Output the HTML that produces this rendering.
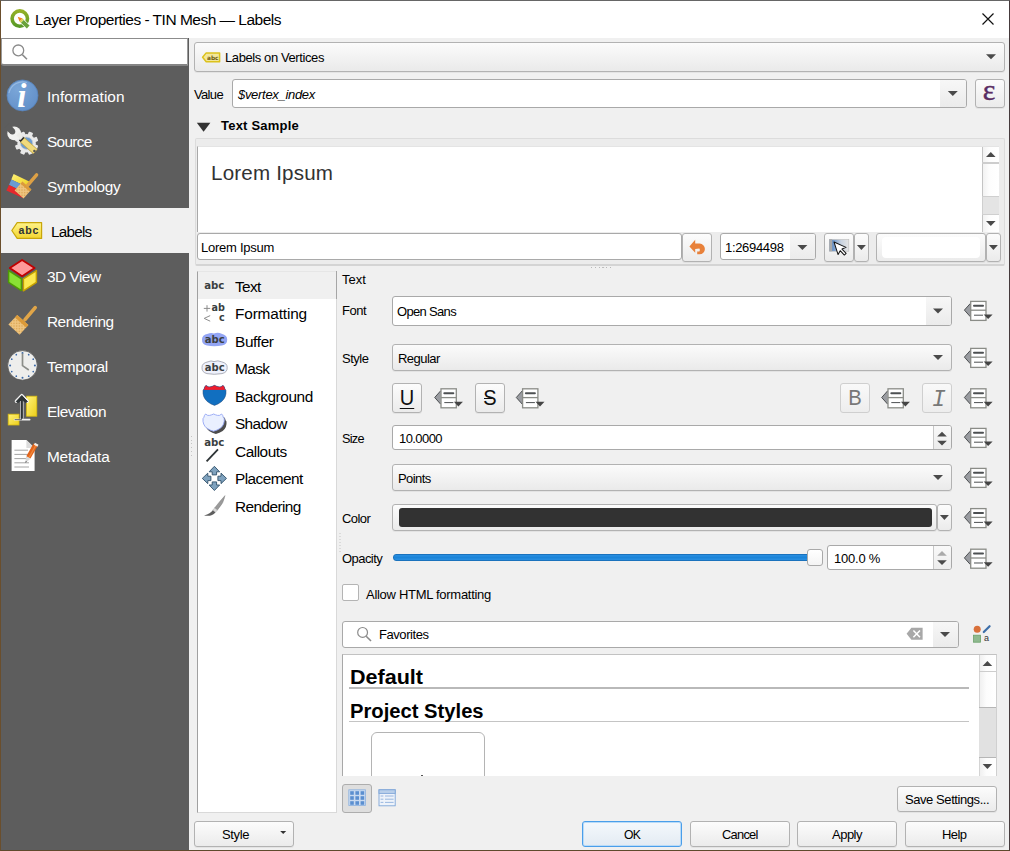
<!DOCTYPE html>
<html><head><meta charset="utf-8"><title>Layer Properties - TIN Mesh — Labels</title>
<style>
*{box-sizing:border-box;margin:0;padding:0}
html,body{width:1010px;height:851px;overflow:hidden;background:#f0f0f0}
body{position:relative;font-family:"Liberation Sans",sans-serif;font-size:13px;color:#000}
.abs{position:absolute}
.tx{white-space:nowrap}
#frame{left:0;top:0;width:1010px;height:851px;border-top:1px solid #666;border-left:1px solid #6a4e2c;border-right:1px solid #453a3c;border-bottom:1px solid #5e4a2c;z-index:50}
#title{left:1px;top:1px;width:1008px;height:37px;background:#fff}
#side{left:1px;top:38px;width:188px;height:812px;background:#5d5d5d}
.btn{border:1px solid #b2b2b2;border-radius:3px;background:linear-gradient(#fcfcfc,#ebebeb);box-shadow:0 1px 0 rgba(0,0,0,0.05)}
.btnd{border:1px solid #cfcfcf;border-radius:3px;background:linear-gradient(#f9f9f9,#ededed)}
.combo{border:1px solid #b2b2b2;border-radius:3px;background:linear-gradient(#fbfbfb,#eaeaea);box-shadow:0 1px 0 rgba(0,0,0,0.05)}
.edit{border:1px solid #a9a9a9;border-radius:3px;background:#fff}
.white{background:#fff}
</style></head><body>
<div id="title" class="abs"></div>
<div id="side" class="abs"></div>
<div class="abs " style="left:1px;top:38px;width:187px;height:27px;background:#fff;border:1px solid #9a9a9a;border-top-color:#8c8c8c;border-bottom:2px solid #858585;border-radius:0 0 0 3px;height:28px"></div>
<div class="abs " style="left:1px;top:208px;width:189px;height:45px;background:#f0f0f0"></div>
<div class="abs combo" style="left:194px;top:42px;width:811px;height:30px;"></div>
<div class="abs edit" style="left:232px;top:79px;width:735px;height:29px;overflow:hidden"><div class="abs" style="right:0;top:0;width:26px;height:100%;background:linear-gradient(#f7f7f7,#ebebeb)"></div></div>
<div class="abs btn" style="left:975px;top:79px;width:30px;height:29px;"></div>
<div class="abs " style="left:195px;top:138px;width:810px;height:128px;background:#ececec;border:1px solid #dcdcdc;border-bottom:2px solid #d4d4d4;border-radius:2px"></div>
<div class="abs white" style="left:197px;top:146px;width:802px;height:86px;border-left:1px solid #a8a8a8;border-top:1px solid #e4e4e4"></div>
<div class="abs " style="left:982px;top:147px;width:17px;height:85px;background:linear-gradient(90deg,#f2f2f2,#fdfdfd 40%,#fff);border-left:1px solid #c4c4c4"></div>
<div class="abs " style="left:982px;top:162px;width:17px;height:2px;background:#cdcdcd"></div>
<div class="abs " style="left:982px;top:196px;width:17px;height:19px;background:#e4e4e4;border:1px solid #cfcfcf;border-right:none"></div>
<div class="abs edit" style="left:197px;top:233px;width:485px;height:27px;"></div>
<div class="abs btn" style="left:682px;top:233px;width:30px;height:29px;"></div>
<div class="abs edit" style="left:720px;top:233px;width:96px;height:27px;overflow:hidden"><div class="abs" style="right:0;top:0;width:25px;height:100%;background:linear-gradient(#f7f7f7,#ebebeb)"></div></div>
<div class="abs btn" style="left:824px;top:233px;width:30px;height:29px;"></div>
<div class="abs btn" style="left:854px;top:233px;width:15px;height:29px;"></div>
<div class="abs btn" style="left:876px;top:233px;width:110px;height:29px;"><div class="abs" style="left:5px;top:3px;right:5px;bottom:3px;background:#fff;border-radius:4px"></div></div>
<div class="abs btn" style="left:986px;top:233px;width:15px;height:29px;"></div>
<div class="abs white" style="left:197px;top:271px;width:140px;height:542px;border:1px solid #d9d9d9;border-left-color:#a0a0a0;border-top-color:#e6e6e6"></div>
<div class="abs " style="left:198px;top:272px;width:138px;height:27px;background:#f0f0f0"></div>
<div class="abs " style="left:336px;top:271px;width:1px;height:28px;background:#a6a6a6"></div>
<div class="abs edit" style="left:392px;top:296px;width:560px;height:30px;overflow:hidden"><div class="abs" style="right:0;top:0;width:25px;height:100%;background:linear-gradient(#f7f7f7,#ebebeb)"></div></div>
<div class="abs combo" style="left:392px;top:344px;width:560px;height:27px;"></div>
<div class="abs btn" style="left:392px;top:383px;width:30px;height:30px;"></div>
<div class="abs btn" style="left:475px;top:383px;width:30px;height:30px;"></div>
<div class="abs btnd" style="left:840px;top:383px;width:30px;height:30px;"></div>
<div class="abs btnd" style="left:922px;top:383px;width:30px;height:30px;"></div>
<div class="abs edit" style="left:392px;top:425px;width:560px;height:25px;overflow:hidden"><div class="abs" style="right:0;top:0;width:18px;height:100%;background:linear-gradient(#f9f9f9,#ececec);border-left:1px solid #c8c8c8"></div></div>
<div class="abs combo" style="left:392px;top:464px;width:560px;height:27px;"></div>
<div class="abs btn" style="left:392px;top:504px;width:545px;height:27px;"><div class="abs" style="left:6px;top:3px;right:4px;bottom:3px;background:#323232;border-radius:3px"></div></div>
<div class="abs btn" style="left:937px;top:504px;width:15px;height:27px;"></div>
<div class="abs " style="left:393px;top:554px;width:423px;height:7px;background:linear-gradient(#2a8fe2,#1b84d8 50%,#2a8fe2);border:1px solid #1a72bd;border-radius:3px"></div>
<div class="abs " style="left:807px;top:549px;width:16px;height:17px;background:linear-gradient(#fff,#f4f4f4);border:1px solid #a9a9a9;border-radius:3px"></div>
<div class="abs edit" style="left:827px;top:545px;width:125px;height:25px;overflow:hidden"><div class="abs" style="right:0;top:0;width:18px;height:100%;background:linear-gradient(#f9f9f9,#ececec);border-left:1px solid #c8c8c8"></div></div>
<div class="abs " style="left:342px;top:584px;width:17px;height:17px;background:#fff;border:1px solid #b4b4b4;border-radius:2px"></div>
<div class="abs edit" style="left:342px;top:621px;width:617px;height:27px;overflow:hidden"><div class="abs" style="right:0;top:0;width:25px;height:100%;background:linear-gradient(#f7f7f7,#ebebeb)"></div></div>
<div class="abs white" style="left:342px;top:654px;width:655px;height:122px;border:1px solid #d0d0d0;border-left-color:#a8a8a8;border-top-color:#c2c2c2;border-bottom:none;overflow:hidden"><div class="abs" style="left:28px;top:77px;width:114px;height:60px;border:1px solid #b4b4b4;border-radius:6px;background:#fff"></div><div class="abs" style="left:6px;top:32px;width:620px;height:2px;background:#b9b9b9"></div><div class="abs" style="left:6px;top:66px;width:620px;height:1px;background:#c4c4c4"></div><div class="abs" style="left:78px;top:120px;width:2px;height:2px;background:#555"></div></div>
<div class="abs " style="left:979px;top:655px;width:17px;height:121px;background:linear-gradient(90deg,#f0f0f0,#fcfcfc 40%,#fff);border-left:1px solid #d4d4d4"></div>
<div class="abs " style="left:979px;top:671px;width:17px;height:1px;background:#cdcdcd"></div>
<div class="abs " style="left:979px;top:707px;width:17px;height:51px;background:#e1e1e1;border-top:1px solid #b6b6b6;border-bottom:1px solid #b6b6b6"></div>
<div class="abs " style="left:342px;top:784px;width:30px;height:29px;background:#dedede;border:1px solid #adadad;border-radius:3px"></div>
<div class="abs btn" style="left:897px;top:786px;width:100px;height:26px;"></div>
<div class="abs btn" style="left:194px;top:821px;width:100px;height:26px;"></div>
<div class="abs " style="left:582px;top:821px;width:100px;height:26px;border:1px solid #4a9eea;border-radius:3px;background:linear-gradient(#f4f8fc,#e3ebf3);box-shadow:inset 0 0 0 1px #b9dbf8"></div>
<div class="abs btn" style="left:690px;top:821px;width:100px;height:26px;"></div>
<div class="abs btn" style="left:797px;top:821px;width:100px;height:26px;"></div>
<div class="abs btn" style="left:905px;top:821px;width:100px;height:26px;"></div>
<svg class="abs" style="left:0;top:0" width="1010" height="851" viewBox="0 0 1010 851">
<defs>
<linearGradient id="gy" x1="0" y1="0" x2="0" y2="1"><stop offset="0" stop-color="#fff38a"/><stop offset="1" stop-color="#f2d631"/></linearGradient>
<linearGradient id="gy2" x1="0" y1="0" x2="1" y2="1"><stop offset="0" stop-color="#fff27a"/><stop offset="1" stop-color="#eccf1a"/></linearGradient>
<radialGradient id="gi" cx="0.35" cy="0.3" r="0.8"><stop offset="0" stop-color="#7aa6d8"/><stop offset="1" stop-color="#628fc8"/></radialGradient>
<linearGradient id="gq" x1="0" y1="0" x2="0" y2="1"><stop offset="0" stop-color="#93b026"/><stop offset="1" stop-color="#589a28"/></linearGradient>
<linearGradient id="gmap" x1="0" y1="0" x2="1" y2="0"><stop offset="0" stop-color="#3f78c0"/><stop offset="0.6" stop-color="#c9d3e0"/><stop offset="1" stop-color="#e4e4e4"/></linearGradient>
<pattern id="dots" width="1.6" height="1.6" patternUnits="userSpaceOnUse"><rect width="1.6" height="1.6" fill="#efc682"/><rect width="0.8" height="0.8" fill="#d9a24e"/></pattern>
</defs>
<g>
<circle cx="19.8" cy="18.6" r="7.7" fill="none" stroke="url(#gq)" stroke-width="3.6"/>
<line x1="22.8" y1="21.8" x2="27.8" y2="26.6" stroke="#ffffff" stroke-width="5.2"/>
<line x1="22.3" y1="21.3" x2="28.2" y2="27" stroke="#69a23a" stroke-width="3.9"/>
<polygon points="17.7,16.7 22.6,18.4 19.5,21.6" fill="#f0841f"/>
<polygon points="22.6,18.4 19.5,21.6 20.7,22.8 23.8,19.6" fill="#dcd24a"/>
</g>
<path d="M982.5 13.5 L993.5 24.5 M993.5 13.5 L982.5 24.5" stroke="#111" stroke-width="1.2" fill="none"/>
<circle cx="18.3" cy="50.4" r="5.4" fill="none" stroke="#8a8a8a" stroke-width="1.3"/><line x1="22.3" y1="54.6" x2="27" y2="59.2" stroke="#8a8a8a" stroke-width="1.5"/>
<circle cx="22.5" cy="95.4" r="15.5" fill="url(#gi)" stroke="#5683bd" stroke-width="0.8"/>
<path d="M9 93 A14 14 0 0 1 27 82.5" fill="none" stroke="#9fc0e6" stroke-width="1.2" opacity="0.8"/>
<text x="17.2" y="107.2" font-family="'Liberation Serif',serif" font-style="italic" font-weight="700" font-size="33" fill="#fff">i</text>
<rect x="24.3" y="131.39999999999998" width="4.6" height="4.600000000000001" rx="1" transform="rotate(22.5 26.6 143.2)" fill="#e9e9e9"/><rect x="24.3" y="131.39999999999998" width="4.6" height="4.600000000000001" rx="1" transform="rotate(67.5 26.6 143.2)" fill="#e9e9e9"/><rect x="24.3" y="131.39999999999998" width="4.6" height="4.600000000000001" rx="1" transform="rotate(112.5 26.6 143.2)" fill="#e9e9e9"/><rect x="24.3" y="131.39999999999998" width="4.6" height="4.600000000000001" rx="1" transform="rotate(157.5 26.6 143.2)" fill="#e9e9e9"/><rect x="24.3" y="131.39999999999998" width="4.6" height="4.600000000000001" rx="1" transform="rotate(202.5 26.6 143.2)" fill="#e9e9e9"/><rect x="24.3" y="131.39999999999998" width="4.6" height="4.600000000000001" rx="1" transform="rotate(247.5 26.6 143.2)" fill="#e9e9e9"/><rect x="24.3" y="131.39999999999998" width="4.6" height="4.600000000000001" rx="1" transform="rotate(292.5 26.6 143.2)" fill="#e9e9e9"/><rect x="24.3" y="131.39999999999998" width="4.6" height="4.600000000000001" rx="1" transform="rotate(337.5 26.6 143.2)" fill="#e9e9e9"/><circle cx="26.6" cy="143.2" r="9.2" fill="#e9e9e9"/><circle cx="26.6" cy="143.2" r="6.2" fill="#6d9dd1" stroke="#cfcfcf" stroke-width="0.8"/>
<line x1="22" y1="139.6" x2="35.4" y2="151.6" stroke="#bfa446" stroke-width="6.6" stroke-linecap="butt"/>
<line x1="22" y1="139.6" x2="35.2" y2="151.4" stroke="#f0da7c" stroke-width="5.2" stroke-linecap="butt"/>
<line x1="20.8" y1="138.4" x2="22.6" y2="140" stroke="#2b2b2b" stroke-width="5.6"/>
<circle cx="34.4" cy="151" r="1.3" fill="#555"/>
<circle cx="14.2" cy="133.4" r="6.9" fill="#f1f1ef"/>
<polygon points="16.5,135.5 19,132 23.2,137 20.6,140" fill="#ecece8"/>
<circle cx="12.4" cy="131.6" r="2.9" fill="#5d5d5d"/>
<polygon points="14.6,129.6 10.4,133.8 4.4,128.6 9.4,123.6" fill="#5d5d5d"/>
<polygon points="13.6,174 29.2,181.4 27.1,187 11.3,179.5" fill="url(#gy2)"/>
<polygon points="11.3,179.5 27.1,187 25,192.5 9,185" fill="#6a9bd2"/>
<polygon points="9,185 25,192.5 22.8,198 6.4,190.6" fill="#e6282c"/>
<polygon points="22.4,181.6 31.4,189.4 23.6,198.6 14.6,190.6" fill="url(#dots)"/>
<polygon points="22.4,181.6 31.4,189.4 29.6,191.6 20.6,183.8" fill="#dc9a38"/>
<line x1="27.6" y1="185.4" x2="36.6" y2="174.8" stroke="#dda045" stroke-width="3.4" stroke-linecap="round"/>
<polygon points="11.8,230.5 17.2,222.6 41.6,222.6 41.6,238.4 17.2,238.4" fill="url(#gy)" stroke="#c8a60a" stroke-width="1.2" stroke-linejoin="round"/>
<text x="18.6" y="233.8" font-family="'Liberation Sans',sans-serif" font-weight="700" font-size="10.6" letter-spacing="0.8" fill="#2e3436">abc</text>
<polygon points="22.1,260 34.6,268 22.1,276.2 9.8,268" fill="#f99" stroke="#c00000" stroke-width="1.8" stroke-linejoin="round"/>
<polygon points="8.6,270.6 21.4,278.8 21.4,290.6 8.6,282.4" fill="#8ae234" stroke="#4e9a06" stroke-width="1.5" stroke-linejoin="round"/>
<polygon points="23.4,278.8 36.4,270.6 36.4,282.4 23.4,290.8" fill="#fce94f" stroke="#c4a000" stroke-width="1.5" stroke-linejoin="round"/>
<polygon points="17.2,315 28.4,325 19.6,334.8 8.4,324.4" fill="url(#dots)"/>
<polygon points="17.2,315 28.4,325 26.2,327.4 15,317.4" fill="#dc9a38"/>
<line x1="25" y1="319.6" x2="35.2" y2="307.6" stroke="#e0a548" stroke-width="3.6" stroke-linecap="round"/>
<circle cx="22.5" cy="365.4" r="14.8" fill="#eeeeec" stroke="#4c4c4c" stroke-width="0.7"/>
<circle cx="22.50" cy="353.00" r="1.0" fill="#3a68a6"/><circle cx="28.70" cy="354.66" r="0.85" fill="#3a68a6"/><circle cx="33.24" cy="359.20" r="0.85" fill="#3a68a6"/><circle cx="34.90" cy="365.40" r="1.0" fill="#3a68a6"/><circle cx="33.24" cy="371.60" r="0.85" fill="#3a68a6"/><circle cx="28.70" cy="376.14" r="0.85" fill="#3a68a6"/><circle cx="22.50" cy="377.80" r="1.0" fill="#3a68a6"/><circle cx="16.30" cy="376.14" r="0.85" fill="#3a68a6"/><circle cx="11.76" cy="371.60" r="0.85" fill="#3a68a6"/><circle cx="10.10" cy="365.40" r="1.0" fill="#3a68a6"/><circle cx="11.76" cy="359.20" r="0.85" fill="#3a68a6"/><circle cx="16.30" cy="354.66" r="0.85" fill="#3a68a6"/>
<path d="M22.5 353.5 L22.5 365.6 L28.8 370" fill="none" stroke="#8b8d88" stroke-width="1.7" stroke-linejoin="round"/>
<rect x="26.6" y="396.2" width="10.2" height="20" fill="url(#gy2)" stroke="#d9bc10" stroke-width="0.8"/>
<rect x="8.2" y="414.2" width="10.8" height="10.8" fill="url(#gy2)" stroke="#d9bc10" stroke-width="0.8"/>
<path d="M21.8 418 L21.8 397 M16.4 401.2 L21.8 395.6 L27.2 401.2" fill="none" stroke="#f4f4f4" stroke-width="3.4" stroke-linecap="round" stroke-linejoin="round"/>
<path d="M14.6 419.6 L29.6 419.6" stroke="#f0f0f0" stroke-width="1.8" stroke-linecap="round"/>
<path d="M21.8 418 L21.8 398" fill="none" stroke="#2e3436" stroke-width="2.2" stroke-linecap="round"/><path d="M16.2 401.6 L21.8 395.6 L27.4 401.6 L25.6 402.6 L21.8 399.4 L18 402.6 Z" fill="#2e3436" stroke="#2e3436" stroke-width="1" stroke-linejoin="round"/>
<path d="M14.6 419.6 L22 419.6" stroke="#2e3436" stroke-width="0.7"/>
<path d="M11.6 440 L26.4 440 L34.6 448 L34.6 471 L11.6 471 Z" fill="#fff"/>
<path d="M26.4 440 L26.4 448 L34.6 448 Z" fill="#dcdcdc"/>
<g stroke="#9a9a9a" stroke-width="0.9"><line x1="14.4" y1="450.2" x2="28" y2="450.2"/><line x1="14.4" y1="454.4" x2="28" y2="454.4"/><line x1="14.4" y1="458.6" x2="28" y2="458.6"/><line x1="14.4" y1="462.8" x2="29" y2="462.8"/><line x1="14.4" y1="467" x2="29" y2="467"/></g>
<line x1="35.6" y1="444.6" x2="28.4" y2="457.4" stroke="#e2641c" stroke-width="4.8"/>
<line x1="35.9" y1="445.2" x2="28.9" y2="457.6" stroke="#f08a3c" stroke-width="1.2"/>
<polygon points="26.1,456.2 30.6,458.8 25.2,463" fill="#d8d8d8"/>
<polygon points="25.9,461 26.9,461.8 25.2,463" fill="#444"/>
<line x1="36.8" y1="442.6" x2="33.2" y2="440.6" stroke="#f4ece4" stroke-width="2.2" transform="translate(1.2,3.2)"/>
<polygon points="202.6,57.3 206.2,52.9 219.6,52.9 219.6,61.7 206.2,61.7" fill="#f3e79a" stroke="#dcc21c" stroke-width="1.5" stroke-linejoin="round"/>
<text x="207" y="59.6" font-family="'DejaVu Sans',sans-serif" font-weight="700" font-size="5.8" fill="#6b5a10">abc</text>
<polygon points="986.0,54.3 996.0,54.3 991,59.3" fill="#4a4a4a"/>
<polygon points="947.8,91.0 957.8,91.0 952.8,96.0" fill="#4a4a4a"/>
<polygon points="797.4,244.9 807.4,244.9 802.4,249.9" fill="#4a4a4a"/>
<polygon points="856.9,245.1 865.9,245.1 861.4,250.1" fill="#4a4a4a"/>
<polygon points="988.9,245.1 997.9,245.1 993.4,250.1" fill="#4a4a4a"/>
<polygon points="933.0,308.5 943.0,308.5 938,313.5" fill="#4a4a4a"/>
<polygon points="933.0,355.1 943.0,355.1 938,360.1" fill="#4a4a4a"/>
<polygon points="933.0,475.1 943.0,475.1 938,480.1" fill="#4a4a4a"/>
<polygon points="939.9,515.1 948.9,515.1 944.4,520.1" fill="#4a4a4a"/>
<polygon points="940.0,632.1 950.0,632.1 945,637.1" fill="#4a4a4a"/>
<polygon points="196.8,122.8 210.4,122.8 203.6,131.8" fill="#333"/>
<polygon points="986.0,157.1 995.5999999999999,157.1 990.8,152.1" fill="#4a4a4a"/>
<polygon points="986.0,221.1 995.5999999999999,221.1 990.8,226.1" fill="#4a4a4a"/>
<polygon points="982.6,665.9 992.1999999999999,665.9 987.4,660.9" fill="#4a4a4a"/>
<polygon points="982.6,764.1 992.1999999999999,764.1 987.4,769.1" fill="#4a4a4a"/>
<polygon points="937.2,436.59999999999997 946.8,436.59999999999997 942,431.8" fill="#4a4a4a"/>
<polygon points="937.2,440.8 946.8,440.8 942,445.59999999999997" fill="#4a4a4a"/>
<polygon points="937.2,555.8 946.8,555.8 942,551.0" fill="#aaaaaa"/>
<polygon points="937.2,560.2 946.8,560.2 942,565.0" fill="#4a4a4a"/>
<polygon points="280.2,831.1 286.2,831.1 283.2,834.1" fill="#333"/>
<path d="M689.4 246.4 L695.2 239.8 L695.2 243.6 L699.6 243.6 A5.3 5.3 0 0 1 699.6 254.2 L697.2 254.2 L697.2 251.6 L699.4 251.6 A2.6 2.6 0 0 0 699.4 248.6 L695.2 248.9 L695.2 252.8 Z" fill="#e8813a"/>
<rect x="829.4" y="239.6" width="19.4" height="11.6" fill="url(#gmap)" stroke="#b9b9b9" stroke-width="0.6"/>
<rect x="829.4" y="239.2" width="2.8" height="12" fill="#a9a9a9"/>
<path d="M834 242 L834 255.2 L837.2 252.2 L839.8 257.6 L842 256.6 L839.4 251.2 L843.8 250.8 Z" fill="#fff" stroke="#111" stroke-width="1" stroke-linejoin="round" transform="rotate(-18 834 242)"/>
<g transform="translate(964,300.8)">
<polygon points="0.4,9.3 6.4,2.6 6.4,16" fill="#9a9ca1"/>
<polyline points="6.4,2.6 0.4,9.3 6.4,16" fill="none" stroke="#4d5052" stroke-width="1"/>
<rect x="6.7" y="0.6" width="15.3" height="19" fill="#fff" stroke="#8a8c87" stroke-width="1.3"/>
<line x1="6.7" y1="9.4" x2="22" y2="9.4" stroke="#8a8c87" stroke-width="1.3"/>
<line x1="10" y1="5" x2="19" y2="5" stroke="#4d5052" stroke-width="2" stroke-linecap="round"/>
<line x1="10" y1="14.4" x2="19" y2="14.4" stroke="#4d5052" stroke-width="1"/>
<polygon points="19.6,13.6 28.6,13.6 24.1,18.2" fill="#444"/>
</g>
<g transform="translate(964,347.8)">
<polygon points="0.4,9.3 6.4,2.6 6.4,16" fill="#9a9ca1"/>
<polyline points="6.4,2.6 0.4,9.3 6.4,16" fill="none" stroke="#4d5052" stroke-width="1"/>
<rect x="6.7" y="0.6" width="15.3" height="19" fill="#fff" stroke="#8a8c87" stroke-width="1.3"/>
<line x1="6.7" y1="9.4" x2="22" y2="9.4" stroke="#8a8c87" stroke-width="1.3"/>
<line x1="10" y1="5" x2="19" y2="5" stroke="#4d5052" stroke-width="2" stroke-linecap="round"/>
<line x1="10" y1="14.4" x2="19" y2="14.4" stroke="#4d5052" stroke-width="1"/>
<polygon points="19.6,13.6 28.6,13.6 24.1,18.2" fill="#444"/>
</g>
<g transform="translate(434.3,388.2)">
<polygon points="0.4,9.3 6.4,2.6 6.4,16" fill="#9a9ca1"/>
<polyline points="6.4,2.6 0.4,9.3 6.4,16" fill="none" stroke="#4d5052" stroke-width="1"/>
<rect x="6.7" y="0.6" width="15.3" height="19" fill="#fff" stroke="#8a8c87" stroke-width="1.3"/>
<line x1="6.7" y1="9.4" x2="22" y2="9.4" stroke="#8a8c87" stroke-width="1.3"/>
<line x1="10" y1="5" x2="19" y2="5" stroke="#4d5052" stroke-width="2" stroke-linecap="round"/>
<line x1="10" y1="14.4" x2="19" y2="14.4" stroke="#4d5052" stroke-width="1"/>
<polygon points="19.6,13.6 28.6,13.6 24.1,18.2" fill="#444"/>
</g>
<g transform="translate(515.9,388.2)">
<polygon points="0.4,9.3 6.4,2.6 6.4,16" fill="#9a9ca1"/>
<polyline points="6.4,2.6 0.4,9.3 6.4,16" fill="none" stroke="#4d5052" stroke-width="1"/>
<rect x="6.7" y="0.6" width="15.3" height="19" fill="#fff" stroke="#8a8c87" stroke-width="1.3"/>
<line x1="6.7" y1="9.4" x2="22" y2="9.4" stroke="#8a8c87" stroke-width="1.3"/>
<line x1="10" y1="5" x2="19" y2="5" stroke="#4d5052" stroke-width="2" stroke-linecap="round"/>
<line x1="10" y1="14.4" x2="19" y2="14.4" stroke="#4d5052" stroke-width="1"/>
<polygon points="19.6,13.6 28.6,13.6 24.1,18.2" fill="#444"/>
</g>
<g transform="translate(881.3,388.2)">
<polygon points="0.4,9.3 6.4,2.6 6.4,16" fill="#9a9ca1"/>
<polyline points="6.4,2.6 0.4,9.3 6.4,16" fill="none" stroke="#4d5052" stroke-width="1"/>
<rect x="6.7" y="0.6" width="15.3" height="19" fill="#fff" stroke="#8a8c87" stroke-width="1.3"/>
<line x1="6.7" y1="9.4" x2="22" y2="9.4" stroke="#8a8c87" stroke-width="1.3"/>
<line x1="10" y1="5" x2="19" y2="5" stroke="#4d5052" stroke-width="2" stroke-linecap="round"/>
<line x1="10" y1="14.4" x2="19" y2="14.4" stroke="#4d5052" stroke-width="1"/>
<polygon points="19.6,13.6 28.6,13.6 24.1,18.2" fill="#444"/>
</g>
<g transform="translate(964,388.2)">
<polygon points="0.4,9.3 6.4,2.6 6.4,16" fill="#9a9ca1"/>
<polyline points="6.4,2.6 0.4,9.3 6.4,16" fill="none" stroke="#4d5052" stroke-width="1"/>
<rect x="6.7" y="0.6" width="15.3" height="19" fill="#fff" stroke="#8a8c87" stroke-width="1.3"/>
<line x1="6.7" y1="9.4" x2="22" y2="9.4" stroke="#8a8c87" stroke-width="1.3"/>
<line x1="10" y1="5" x2="19" y2="5" stroke="#4d5052" stroke-width="2" stroke-linecap="round"/>
<line x1="10" y1="14.4" x2="19" y2="14.4" stroke="#4d5052" stroke-width="1"/>
<polygon points="19.6,13.6 28.6,13.6 24.1,18.2" fill="#444"/>
</g>
<g transform="translate(964,427.8)">
<polygon points="0.4,9.3 6.4,2.6 6.4,16" fill="#9a9ca1"/>
<polyline points="6.4,2.6 0.4,9.3 6.4,16" fill="none" stroke="#4d5052" stroke-width="1"/>
<rect x="6.7" y="0.6" width="15.3" height="19" fill="#fff" stroke="#8a8c87" stroke-width="1.3"/>
<line x1="6.7" y1="9.4" x2="22" y2="9.4" stroke="#8a8c87" stroke-width="1.3"/>
<line x1="10" y1="5" x2="19" y2="5" stroke="#4d5052" stroke-width="2" stroke-linecap="round"/>
<line x1="10" y1="14.4" x2="19" y2="14.4" stroke="#4d5052" stroke-width="1"/>
<polygon points="19.6,13.6 28.6,13.6 24.1,18.2" fill="#444"/>
</g>
<g transform="translate(964,467.8)">
<polygon points="0.4,9.3 6.4,2.6 6.4,16" fill="#9a9ca1"/>
<polyline points="6.4,2.6 0.4,9.3 6.4,16" fill="none" stroke="#4d5052" stroke-width="1"/>
<rect x="6.7" y="0.6" width="15.3" height="19" fill="#fff" stroke="#8a8c87" stroke-width="1.3"/>
<line x1="6.7" y1="9.4" x2="22" y2="9.4" stroke="#8a8c87" stroke-width="1.3"/>
<line x1="10" y1="5" x2="19" y2="5" stroke="#4d5052" stroke-width="2" stroke-linecap="round"/>
<line x1="10" y1="14.4" x2="19" y2="14.4" stroke="#4d5052" stroke-width="1"/>
<polygon points="19.6,13.6 28.6,13.6 24.1,18.2" fill="#444"/>
</g>
<g transform="translate(964,508)">
<polygon points="0.4,9.3 6.4,2.6 6.4,16" fill="#9a9ca1"/>
<polyline points="6.4,2.6 0.4,9.3 6.4,16" fill="none" stroke="#4d5052" stroke-width="1"/>
<rect x="6.7" y="0.6" width="15.3" height="19" fill="#fff" stroke="#8a8c87" stroke-width="1.3"/>
<line x1="6.7" y1="9.4" x2="22" y2="9.4" stroke="#8a8c87" stroke-width="1.3"/>
<line x1="10" y1="5" x2="19" y2="5" stroke="#4d5052" stroke-width="2" stroke-linecap="round"/>
<line x1="10" y1="14.4" x2="19" y2="14.4" stroke="#4d5052" stroke-width="1"/>
<polygon points="19.6,13.6 28.6,13.6 24.1,18.2" fill="#444"/>
</g>
<g transform="translate(964,548.6)">
<polygon points="0.4,9.3 6.4,2.6 6.4,16" fill="#9a9ca1"/>
<polyline points="6.4,2.6 0.4,9.3 6.4,16" fill="none" stroke="#4d5052" stroke-width="1"/>
<rect x="6.7" y="0.6" width="15.3" height="19" fill="#fff" stroke="#8a8c87" stroke-width="1.3"/>
<line x1="6.7" y1="9.4" x2="22" y2="9.4" stroke="#8a8c87" stroke-width="1.3"/>
<line x1="10" y1="5" x2="19" y2="5" stroke="#4d5052" stroke-width="2" stroke-linecap="round"/>
<line x1="10" y1="14.4" x2="19" y2="14.4" stroke="#4d5052" stroke-width="1"/>
<polygon points="19.6,13.6 28.6,13.6 24.1,18.2" fill="#444"/>
</g>
<circle cx="362.6" cy="632.4" r="4.9" fill="none" stroke="#8a8a8a" stroke-width="1.2"/><line x1="366.2" y1="636.2" x2="371" y2="641" stroke="#8a8a8a" stroke-width="1.6"/>
<polygon points="906.6,633.8 911.4,627.8 922.6,627.8 922.6,639.8 911.4,639.8" fill="#a8a8a8"/>
<path d="M913.4 630.4 L920 637.2 M920 630.4 L913.4 637.2" stroke="#fff" stroke-width="1.5"/>
<circle cx="977.2" cy="629.3" r="3.5" fill="#d9703a"/>
<line x1="983.8" y1="632" x2="989.6" y2="626.2" stroke="#3d6ea8" stroke-width="2.2" stroke-linecap="round"/>
<rect x="973.6" y="635.2" width="7" height="7" fill="#8fb98f" stroke="#6aa06a" stroke-width="0.8"/>
<text x="984" y="641.4" font-family="'Liberation Sans',sans-serif" font-size="9" fill="#333">a</text>
<rect x="348.8" y="789.8" width="16.8" height="15.8" fill="#c9daf0" stroke="#8eb2df" stroke-width="0.8"/><rect x="350.2" y="791.2" width="3.6" height="3.6" fill="#5b8fd0"/><rect x="355.4" y="791.2" width="3.6" height="3.6" fill="#5b8fd0"/><rect x="360.59999999999997" y="791.2" width="3.6" height="3.6" fill="#5b8fd0"/><rect x="350.2" y="796.2" width="3.6" height="3.6" fill="#5b8fd0"/><rect x="355.4" y="796.2" width="3.6" height="3.6" fill="#5b8fd0"/><rect x="360.59999999999997" y="796.2" width="3.6" height="3.6" fill="#5b8fd0"/><rect x="350.2" y="801.2" width="3.6" height="3.6" fill="#5b8fd0"/><rect x="355.4" y="801.2" width="3.6" height="3.6" fill="#5b8fd0"/><rect x="360.59999999999997" y="801.2" width="3.6" height="3.6" fill="#5b8fd0"/>
<rect x="379" y="789.8" width="16.2" height="16" fill="#eef3fa" stroke="#7fa6d8" stroke-width="0.9"/>
<rect x="379" y="789.8" width="16.2" height="3.6" fill="#b9cfea" stroke="#7fa6d8" stroke-width="0.9"/>
<g stroke="#8fb0dc" stroke-width="0.9"><line x1="380.6" y1="796" x2="383.4" y2="796"/><line x1="385" y1="796" x2="393.6" y2="796"/><line x1="380.6" y1="799.2" x2="383.4" y2="799.2"/><line x1="385" y1="799.2" x2="393.6" y2="799.2"/><line x1="380.6" y1="802.4" x2="383.4" y2="802.4"/><line x1="385" y1="802.4" x2="393.6" y2="802.4"/></g>
<rect x="591.0" y="267" width="1" height="1" fill="#b8b8b8"/><rect x="595.0" y="267" width="1" height="1" fill="#b8b8b8"/><rect x="599.0" y="267" width="1" height="1" fill="#b8b8b8"/><rect x="602.1" y="267" width="1" height="1" fill="#b8b8b8"/><rect x="603.1" y="267" width="1" height="1" fill="#b8b8b8"/><rect x="606.0" y="267" width="1" height="1" fill="#b8b8b8"/><rect x="610.0" y="267" width="1" height="1" fill="#b8b8b8"/><rect x="339.5" y="533" width="1" height="1" fill="#c4c4c4"/><rect x="339.5" y="536" width="1" height="1" fill="#c4c4c4"/><rect x="339.5" y="539" width="1" height="1" fill="#c4c4c4"/><rect x="339.5" y="542" width="1" height="1" fill="#c4c4c4"/><rect x="339.5" y="545" width="1" height="1" fill="#c4c4c4"/><rect x="339.5" y="548" width="1" height="1" fill="#c4c4c4"/><rect x="339.5" y="551" width="1" height="1" fill="#c4c4c4"/><rect x="191" y="436" width="1" height="1" fill="#c4c4c4"/><rect x="191" y="440" width="1" height="1" fill="#c4c4c4"/><rect x="191" y="443" width="1" height="1" fill="#c4c4c4"/><rect x="191" y="447" width="1" height="1" fill="#c4c4c4"/><rect x="191" y="451" width="1" height="1" fill="#c4c4c4"/><rect x="191" y="455" width="1" height="1" fill="#c4c4c4"/>
<text x="204.2" y="289.2" font-family="'DejaVu Sans',sans-serif" font-weight="700" font-size="10.2" fill="#3a3f41">abc</text>
<path d="M207 305.2 L207 311.6 M203.8 308.4 L210.2 308.4" stroke="#8c8c8c" stroke-width="1"/>
<text x="211.6" y="311.3" font-family="'DejaVu Sans',sans-serif" font-weight="700" font-size="9.6" fill="#3a3f41">ab</text>
<path d="M210.2 315.6 L204.2 318.4 L210.2 321.2" fill="none" stroke="#8c8c8c" stroke-width="1"/>
<text x="219" y="320.8" font-family="'DejaVu Sans',sans-serif" font-weight="700" font-size="9.6" fill="#3a3f41">c</text>
<path d="M208 333.8 Q211 332.2 214 333.6 Q218 332 221.6 333.8 Q227.4 335.2 227.2 339.6 Q227.4 344.4 222 345.6 Q214 347 207 345.6 Q201.8 344.4 202 339.6 Q201.8 335 208 333.8 Z" fill="#93a5f4"/>
<text x="204.8" y="342.5" font-family="'DejaVu Sans',sans-serif" font-weight="700" font-size="10" fill="#3a3f41">abc</text>
<path d="M208 361.8 Q211 360.2 214 361.6 Q218 360 221.6 361.8 Q227.4 363.2 227.2 367.6 Q227.4 372.4 222 373.6 Q214 375 207 373.6 Q201.8 372.4 202 367.6 Q201.8 363 208 361.8 Z" fill="#eef1fc" stroke="#9a9da8" stroke-width="0.8"/>
<text x="204.8" y="370.9" font-family="'DejaVu Sans',sans-serif" font-weight="700" font-size="10" fill="#3a3f41">abc</text>
<clipPath id="shc"><path d="M204.6 387 L206 385.3 Q208 387.4 210.2 386.8 Q212.4 386.4 214.5 385.3 Q216.6 386.4 218.8 386.8 Q221 387.4 223 385.3 L224.4 387 Q224.6 389 226 390.4 Q226.6 397 221.8 401.4 Q218.4 404.2 214.5 405.4 Q210.6 404.2 207.2 401.4 Q202.4 397 203 390.4 Q204.4 389 204.6 387 Z"/></clipPath>
<path d="M204.6 387 L206 385.3 Q208 387.4 210.2 386.8 Q212.4 386.4 214.5 385.3 Q216.6 386.4 218.8 386.8 Q221 387.4 223 385.3 L224.4 387 Q224.6 389 226 390.4 Q226.6 397 221.8 401.4 Q218.4 404.2 214.5 405.4 Q210.6 404.2 207.2 401.4 Q202.4 397 203 390.4 Q204.4 389 204.6 387 Z" fill="#116fc0"/>
<rect x="202" y="384" width="25" height="5.9" fill="#f01c2c" clip-path="url(#shc)"/>
<path d="M204.6 387 L206 385.3 Q208 387.4 210.2 386.8 Q212.4 386.4 214.5 385.3 Q216.6 386.4 218.8 386.8 Q221 387.4 223 385.3 L224.4 387 Q224.6 389 226 390.4 Q226.6 397 221.8 401.4 Q218.4 404.2 214.5 405.4 Q210.6 404.2 207.2 401.4 Q202.4 397 203 390.4 Q204.4 389 204.6 387 Z" fill="none" stroke="#2a4a78" stroke-width="0.5"/>
<path d="M204.4 415.6 L205.6 414 Q207.6 416 209.6 415.4 Q211.6 415 213.6 414 Q215.6 415 217.6 415.4 Q219.6 416 221.6 414 L222.8 415.6 Q223 417.4 224.2 418.6 Q224.8 424.6 220.4 428.2 Q217.2 430.4 213.6 431.2 Q210 430.4 206.8 428.2 Q202.4 424.6 203 418.6 Q204.2 417.4 204.4 415.6 Z" fill="#4c4c4c" transform="translate(2.3,2.9)"/>
<path d="M204.4 415.6 L205.6 414 Q207.6 416 209.6 415.4 Q211.6 415 213.6 414 Q215.6 415 217.6 415.4 Q219.6 416 221.6 414 L222.8 415.6 Q223 417.4 224.2 418.6 Q224.8 424.6 220.4 428.2 Q217.2 430.4 213.6 431.2 Q210 430.4 206.8 428.2 Q202.4 424.6 203 418.6 Q204.2 417.4 204.4 415.6 Z" fill="#eaf0ff" stroke="#93a5f4" stroke-width="0.9"/>
<text x="204.2" y="446.4" font-family="'DejaVu Sans',sans-serif" font-weight="700" font-size="10.2" fill="#3a3f41">abc</text>
<line x1="218" y1="449.4" x2="206.6" y2="461.4" stroke="#2e3436" stroke-width="1.8"/>
<path d="M214.40 466.30 L219.65 471.80 L216.60 471.80 L216.60 474.90 L212.20 474.90 L212.20 471.80 L209.15 471.80 Z" fill="#7fa2be" stroke="#30506a" stroke-width="0.9" stroke-linejoin="round" transform="rotate(0 214.4 478.4)"/><path d="M214.40 466.30 L219.65 471.80 L216.60 471.80 L216.60 474.90 L212.20 474.90 L212.20 471.80 L209.15 471.80 Z" fill="#7fa2be" stroke="#30506a" stroke-width="0.9" stroke-linejoin="round" transform="rotate(90 214.4 478.4)"/><path d="M214.40 466.30 L219.65 471.80 L216.60 471.80 L216.60 474.90 L212.20 474.90 L212.20 471.80 L209.15 471.80 Z" fill="#7fa2be" stroke="#30506a" stroke-width="0.9" stroke-linejoin="round" transform="rotate(180 214.4 478.4)"/><path d="M214.40 466.30 L219.65 471.80 L216.60 471.80 L216.60 474.90 L212.20 474.90 L212.20 471.80 L209.15 471.80 Z" fill="#7fa2be" stroke="#30506a" stroke-width="0.9" stroke-linejoin="round" transform="rotate(270 214.4 478.4)"/>
<path d="M225 495.6 Q224 503 217.4 510 L214.6 508 Q220 501 225 495.6 Z" fill="#9a9a9a" stroke="#777" stroke-width="0.4"/>
<path d="M217.4 510 L214.6 508 L212.8 510.2 L215.4 512.4 Z" fill="#d9d9d9" stroke="#999" stroke-width="0.4"/>
<path d="M215.4 512.4 L212.8 510.2 Q210.6 513.6 204 515.4 Q211.6 517 215.4 512.4 Z" fill="#5e5e5e"/>
</svg>
<div class="abs tx" style="left:35px;top:11px;font-size:15.5px;line-height:17px;height:17px;letter-spacing:-0.505px;font-weight:400;font-style:normal;color:#000;font-family:'Liberation Sans',sans-serif;">Layer Properties - TIN Mesh — Labels</div>
<div class="abs tx" style="left:47px;top:88px;font-size:15.4px;line-height:17px;height:17px;letter-spacing:0.055px;font-weight:400;font-style:normal;color:#fff;font-family:'Liberation Sans',sans-serif;">Information</div>
<div class="abs tx" style="left:47px;top:133px;font-size:15.4px;line-height:17px;height:17px;letter-spacing:-0.711px;font-weight:400;font-style:normal;color:#fff;font-family:'Liberation Sans',sans-serif;">Source</div>
<div class="abs tx" style="left:47px;top:178px;font-size:15.4px;line-height:17px;height:17px;letter-spacing:-0.293px;font-weight:400;font-style:normal;color:#fff;font-family:'Liberation Sans',sans-serif;">Symbology</div>
<div class="abs tx" style="left:51px;top:223px;font-size:15.4px;line-height:17px;height:17px;letter-spacing:-0.750px;font-weight:400;font-style:normal;color:#000;font-family:'Liberation Sans',sans-serif;transform:scaleX(0.9912);transform-origin:0 0;">Labels</div>
<div class="abs tx" style="left:47px;top:268px;font-size:15.4px;line-height:17px;height:17px;letter-spacing:-0.504px;font-weight:400;font-style:normal;color:#fff;font-family:'Liberation Sans',sans-serif;">3D View</div>
<div class="abs tx" style="left:47px;top:313px;font-size:15.4px;line-height:17px;height:17px;letter-spacing:-0.503px;font-weight:400;font-style:normal;color:#fff;font-family:'Liberation Sans',sans-serif;">Rendering</div>
<div class="abs tx" style="left:47px;top:358px;font-size:15.4px;line-height:17px;height:17px;letter-spacing:-0.289px;font-weight:400;font-style:normal;color:#fff;font-family:'Liberation Sans',sans-serif;">Temporal</div>
<div class="abs tx" style="left:47px;top:403px;font-size:15.4px;line-height:17px;height:17px;letter-spacing:-0.481px;font-weight:400;font-style:normal;color:#fff;font-family:'Liberation Sans',sans-serif;">Elevation</div>
<div class="abs tx" style="left:47px;top:448px;font-size:15.4px;line-height:17px;height:17px;letter-spacing:-0.209px;font-weight:400;font-style:normal;color:#fff;font-family:'Liberation Sans',sans-serif;">Metadata</div>
<div class="abs tx" style="left:235px;top:278px;font-size:15.4px;line-height:17px;height:17px;letter-spacing:-0.684px;font-weight:400;font-style:normal;color:#000;font-family:'Liberation Sans',sans-serif;">Text</div>
<div class="abs tx" style="left:235px;top:305px;font-size:15.4px;line-height:17px;height:17px;letter-spacing:-0.156px;font-weight:400;font-style:normal;color:#000;font-family:'Liberation Sans',sans-serif;">Formatting</div>
<div class="abs tx" style="left:235px;top:333px;font-size:15.4px;line-height:17px;height:17px;letter-spacing:-0.366px;font-weight:400;font-style:normal;color:#000;font-family:'Liberation Sans',sans-serif;">Buffer</div>
<div class="abs tx" style="left:235px;top:360px;font-size:15.4px;line-height:17px;height:17px;letter-spacing:-0.595px;font-weight:400;font-style:normal;color:#000;font-family:'Liberation Sans',sans-serif;">Mask</div>
<div class="abs tx" style="left:235px;top:388px;font-size:15.4px;line-height:17px;height:17px;letter-spacing:-0.434px;font-weight:400;font-style:normal;color:#000;font-family:'Liberation Sans',sans-serif;">Background</div>
<div class="abs tx" style="left:235px;top:415px;font-size:15.4px;line-height:17px;height:17px;letter-spacing:-0.654px;font-weight:400;font-style:normal;color:#000;font-family:'Liberation Sans',sans-serif;">Shadow</div>
<div class="abs tx" style="left:235px;top:443px;font-size:15.4px;line-height:17px;height:17px;letter-spacing:-0.489px;font-weight:400;font-style:normal;color:#000;font-family:'Liberation Sans',sans-serif;">Callouts</div>
<div class="abs tx" style="left:235px;top:470px;font-size:15.4px;line-height:17px;height:17px;letter-spacing:-0.558px;font-weight:400;font-style:normal;color:#000;font-family:'Liberation Sans',sans-serif;">Placement</div>
<div class="abs tx" style="left:235px;top:498px;font-size:15.4px;line-height:17px;height:17px;letter-spacing:-0.581px;font-weight:400;font-style:normal;color:#000;font-family:'Liberation Sans',sans-serif;">Rendering</div>
<div class="abs tx" style="left:225px;top:50px;font-size:13px;line-height:15px;height:15px;letter-spacing:-0.402px;font-weight:400;font-style:normal;color:#000;font-family:'Liberation Sans',sans-serif;">Labels on Vertices</div>
<div class="abs tx" style="left:194px;top:87px;font-size:13px;line-height:15px;height:15px;letter-spacing:-0.659px;font-weight:400;font-style:normal;color:#000;font-family:'Liberation Sans',sans-serif;">Value</div>
<div class="abs tx" style="left:238px;top:87px;font-size:13px;line-height:15px;height:15px;letter-spacing:-0.304px;font-weight:400;font-style:italic;color:#000;font-family:'Liberation Sans',sans-serif;">$vertex_index</div>
<div class="abs tx" style="left:221px;top:118px;font-size:13px;line-height:15px;height:15px;letter-spacing:0.216px;font-weight:700;font-style:normal;color:#000;font-family:'Liberation Sans',sans-serif;">Text Sample</div>
<div class="abs tx" style="left:211px;top:161px;font-size:20.6px;line-height:23px;height:23px;letter-spacing:0.183px;font-weight:400;font-style:normal;color:#323232;font-family:'Liberation Sans',sans-serif;">Lorem Ipsum</div>
<div class="abs tx" style="left:201px;top:240px;font-size:13px;line-height:15px;height:15px;letter-spacing:-0.261px;font-weight:400;font-style:normal;color:#000;font-family:'Liberation Sans',sans-serif;">Lorem Ipsum</div>
<div class="abs tx" style="left:725px;top:240px;font-size:13px;line-height:15px;height:15px;letter-spacing:-0.317px;font-weight:400;font-style:normal;color:#000;font-family:'Liberation Sans',sans-serif;">1:2694498</div>
<div class="abs tx" style="left:342px;top:272px;font-size:13px;line-height:15px;height:15px;letter-spacing:0.039px;font-weight:400;font-style:normal;color:#000;font-family:'Liberation Sans',sans-serif;">Text</div>
<div class="abs tx" style="left:342px;top:303px;font-size:13px;line-height:15px;height:15px;letter-spacing:-0.454px;font-weight:400;font-style:normal;color:#000;font-family:'Liberation Sans',sans-serif;">Font</div>
<div class="abs tx" style="left:397px;top:304px;font-size:13px;line-height:15px;height:15px;letter-spacing:-0.672px;font-weight:400;font-style:normal;color:#000;font-family:'Liberation Sans',sans-serif;">Open Sans</div>
<div class="abs tx" style="left:342px;top:351px;font-size:13px;line-height:15px;height:15px;letter-spacing:-0.501px;font-weight:400;font-style:normal;color:#000;font-family:'Liberation Sans',sans-serif;">Style</div>
<div class="abs tx" style="left:398px;top:351px;font-size:13px;line-height:15px;height:15px;letter-spacing:-0.547px;font-weight:400;font-style:normal;color:#000;font-family:'Liberation Sans',sans-serif;">Regular</div>
<div class="abs tx" style="left:342px;top:431px;font-size:13px;line-height:15px;height:15px;letter-spacing:-0.750px;font-weight:400;font-style:normal;color:#000;font-family:'Liberation Sans',sans-serif;transform:scaleX(0.9777);transform-origin:0 0;">Size</div>
<div class="abs tx" style="left:399px;top:431px;font-size:13px;line-height:15px;height:15px;letter-spacing:-0.571px;font-weight:400;font-style:normal;color:#000;font-family:'Liberation Sans',sans-serif;">10.0000</div>
<div class="abs tx" style="left:398px;top:471px;font-size:13px;line-height:15px;height:15px;letter-spacing:-0.590px;font-weight:400;font-style:normal;color:#000;font-family:'Liberation Sans',sans-serif;">Points</div>
<div class="abs tx" style="left:342px;top:511px;font-size:13px;line-height:15px;height:15px;letter-spacing:-0.556px;font-weight:400;font-style:normal;color:#000;font-family:'Liberation Sans',sans-serif;">Color</div>
<div class="abs tx" style="left:342px;top:551px;font-size:13px;line-height:15px;height:15px;letter-spacing:-0.554px;font-weight:400;font-style:normal;color:#000;font-family:'Liberation Sans',sans-serif;">Opacity</div>
<div class="abs tx" style="left:834px;top:551px;font-size:13px;line-height:15px;height:15px;letter-spacing:-0.215px;font-weight:400;font-style:normal;color:#000;font-family:'Liberation Sans',sans-serif;">100.0 %</div>
<div class="abs tx" style="left:366px;top:587px;font-size:13px;line-height:15px;height:15px;letter-spacing:-0.286px;font-weight:400;font-style:normal;color:#000;font-family:'Liberation Sans',sans-serif;">Allow HTML formatting</div>
<div class="abs tx" style="left:379px;top:627px;font-size:13px;line-height:15px;height:15px;letter-spacing:-0.441px;font-weight:400;font-style:normal;color:#000;font-family:'Liberation Sans',sans-serif;">Favorites</div>
<div class="abs tx" style="left:350px;top:666px;font-size:20px;line-height:22px;height:22px;letter-spacing:0.000px;font-weight:700;font-style:normal;color:#000;font-family:'Liberation Sans',sans-serif;transform:scaleX(1.0767);transform-origin:0 0;">Default</div>
<div class="abs tx" style="left:350px;top:700px;font-size:20px;line-height:22px;height:22px;letter-spacing:0.000px;font-weight:700;font-style:normal;color:#000;font-family:'Liberation Sans',sans-serif;transform:scaleX(1.0099);transform-origin:0 0;">Project Styles</div>
<div class="abs tx" style="left:905px;top:792px;font-size:13px;line-height:15px;height:15px;letter-spacing:-0.429px;font-weight:400;font-style:normal;color:#000;font-family:'Liberation Sans',sans-serif;">Save Settings...</div>
<div class="abs tx" style="left:222px;top:827px;font-size:13px;line-height:15px;height:15px;letter-spacing:-0.361px;font-weight:400;font-style:normal;color:#000;font-family:'Liberation Sans',sans-serif;">Style</div>
<div class="abs tx" style="left:624px;top:827px;font-size:13px;line-height:15px;height:15px;letter-spacing:-0.750px;font-weight:400;font-style:normal;color:#000;font-family:'Liberation Sans',sans-serif;transform:scaleX(0.9366);transform-origin:0 0;">OK</div>
<div class="abs tx" style="left:722px;top:827px;font-size:13px;line-height:15px;height:15px;letter-spacing:-0.750px;font-weight:400;font-style:normal;color:#000;font-family:'Liberation Sans',sans-serif;transform:scaleX(0.9897);transform-origin:0 0;">Cancel</div>
<div class="abs tx" style="left:832px;top:827px;font-size:13px;line-height:15px;height:15px;letter-spacing:-0.506px;font-weight:400;font-style:normal;color:#000;font-family:'Liberation Sans',sans-serif;">Apply</div>
<div class="abs tx" style="left:942px;top:827px;font-size:13px;line-height:15px;height:15px;letter-spacing:-0.588px;font-weight:400;font-style:normal;color:#000;font-family:'Liberation Sans',sans-serif;">Help</div>
<div class="abs tx" style="left:978px;top:78px;width:22px;height:29px;line-height:23px;-webkit-text-stroke:0.4px #5a2d63;text-align:center;font-family:'Liberation Serif','DejaVu Serif',serif;font-size:30px;color:#5a2d63">ε</div>
<div class="abs tx" style="left:392px;top:383px;width:30px;height:30px;line-height:30px;text-align:center;font-size:22px;color:#111;transform:scaleX(0.91)"><span style="text-decoration:underline;text-decoration-thickness:1px;text-underline-offset:2.5px">U</span></div>
<div class="abs tx" style="left:475px;top:383px;width:30px;height:30px;line-height:30px;text-align:center;font-size:22px;color:#111;transform:scaleX(0.91)">S</div>
<div class="abs" style="left:484px;top:398px;width:8px;height:1px;background:#111"></div>
<div class="abs tx" style="left:840px;top:383px;width:30px;height:30px;line-height:30px;text-align:center;font-size:21.8px;color:#787878;transform:scaleX(0.93)">B</div>
<div class="abs tx" style="left:924px;top:385px;width:30px;height:30px;line-height:30px;text-align:center;font-size:23px;font-style:italic;font-family:'Liberation Mono',monospace;color:#787878">I</div>
<div id="frame" class="abs"></div>
</body></html>
